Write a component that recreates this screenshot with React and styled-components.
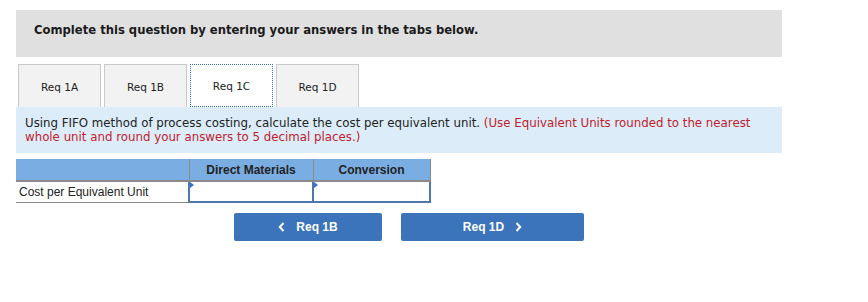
import React, { useState } from 'react'
import styled, { createGlobalStyle } from 'styled-components'

const GlobalStyle = createGlobalStyle`
  body {
    margin: 0;
    background: #fff;
    font-family: "DejaVu Sans", Verdana, sans-serif;
  }
`;

const tabs = ["Req 1A", "Req 1B", "Req 1C", "Req 1D"];

export default function App() {
    const [active, setActive] = useState(2);

    return (
        <Page>
            <GlobalStyle />
            <Banner>Complete this question by entering your answers in the tabs below.</Banner>
            <TabRow>
                {tabs.map((name, i) => (
                    <Tab key={name} $active={i === active} onClick={() => setActive(i)}>{name}</Tab>
                ))}
            </TabRow>
            <Instructions>
                <p>
                    Using FIFO method of process costing, calculate the cost per equivalent unit.{" "}
                    <Red>(Use Equivalent Units rounded to the nearest whole unit and round your answers to 5 decimal places.)</Red>
                </p>
            </Instructions>
            <Table>
                <colgroup>
                    <col style={{ width: 173 }} />
                    <col style={{ width: 124 }} />
                    <col style={{ width: 117 }} />
                </colgroup>
                <thead>
                    <tr>
                        <HeadCell></HeadCell>
                        <HeadCell>Direct Materials</HeadCell>
                        <HeadCell>Conversion</HeadCell>
                    </tr>
                </thead>
                <tbody>
                    <BodyRow>
                        <LabelCell>Cost per Equivalent Unit</LabelCell>
                        <InputCell><Marker /><Field /></InputCell>
                        <InputCell><Marker /><Field /></InputCell>
                    </BodyRow>
                </tbody>
            </Table>
            <NavRow>
                <NavButton $width={148}>
                    <Chevron viewBox="0 0 7 10"><path d="M5.5 1 L1.8 5 L5.5 9" /></Chevron>
                    Req 1B
                </NavButton>
                <NavButton $width={183}>
                    Req 1D
                    <Chevron viewBox="0 0 7 10"><path d="M1.5 1 L5.2 5 L1.5 9" /></Chevron>
                </NavButton>
            </NavRow>
        </Page>
    )
}

const Page = styled.div`
  padding: 10px 0 0 16px;
  width: 766px;
`;

const Banner = styled.div`
  background: #e0e0e0;
  height: 47px;
  box-sizing: border-box;
  padding: 13px 0 0 18px;
  font-weight: bold;
  font-size: 11.6px;
  color: #1a1a1a;
`;

const TabRow = styled.div`
  display: flex;
  gap: 3px;
  margin: 7px 0 0 2px;
`;

const Tab = styled.div`
  width: 83px;
  height: 43px;
  box-sizing: border-box;
  display: flex;
  align-items: center;
  justify-content: center;
  padding-top: 1px;
  font-size: 10.5px;
  color: #222;
  cursor: pointer;
  background: ${p => p.$active ? "#fff" : "#f2f2f2"};
  border: ${p => p.$active ? "1px dotted #2f6fb8" : "1px solid #c9c9c9"};
  border-bottom: ${p => p.$active ? "1px dotted #2f6fb8" : "none"};
`;

const Instructions = styled.div`
  background: #dcedf9;
  height: 46px;
  box-sizing: border-box;
  padding: 9px 9px 0;
  font-size: 11.8px;
  line-height: 14px;
  color: #222;

  p { margin: 0; }
`;

const Red = styled.span`
  color: #c0212c;
`;

const Table = styled.table`
  margin-top: 6px;
  border-collapse: collapse;
  table-layout: fixed;
  width: 414px;
  font-family: "Liberation Sans", Arial, sans-serif;
  font-size: 12px;
  color: #222;
`;

const HeadCell = styled.th`
  background: #7aaee3;
  height: 21px;
  padding: 0;
  font-weight: bold;
  border-left: 1px solid #8a8a8a;
  border-bottom: 2px solid #8a8a8a;
  &:first-child { border-left: none; }
  &:last-child { border-right: 1px solid #8a8a8a; }
`;

const BodyRow = styled.tr`
  height: 21px;
`;

const LabelCell = styled.td`
  padding: 0 0 0 3px;
  text-align: left;
  border-bottom: 1px solid #8a8a8a;
  border-right: 1px solid #8a8a8a;
`;

const InputCell = styled.td`
  position: relative;
  padding: 0;
  border: 2px solid #4e78ad;
`;

const Marker = styled.span`
  position: absolute;
  left: 0;
  top: 0;
  width: 0;
  height: 0;
  border-top: 3px solid transparent;
  border-bottom: 3px solid transparent;
  border-left: 4px solid #3b73c4;
`;

const Field = styled.input`
  display: block;
  border: none;
  outline: none;
  padding: 0;
  width: 100%;
  height: 17px;
  box-sizing: border-box;
  background: transparent;
`;

const NavRow = styled.div`
  display: flex;
  gap: 19px;
  margin: 10px 0 0 218px;
`;

const NavButton = styled.button`
  width: ${p => p.$width}px;
  height: 28px;
  display: flex;
  align-items: center;
  justify-content: center;
  gap: 11px;
  background: #3b74ba;
  border: none;
  border-radius: 2px;
  color: #fff;
  font-family: "Liberation Sans", Arial, sans-serif;
  font-weight: bold;
  font-size: 12px;
  cursor: pointer;
`;

const Chevron = styled.svg`
  width: 7px;
  height: 10px;
  fill: none;
  stroke: #fff;
  stroke-width: 2;
`;
